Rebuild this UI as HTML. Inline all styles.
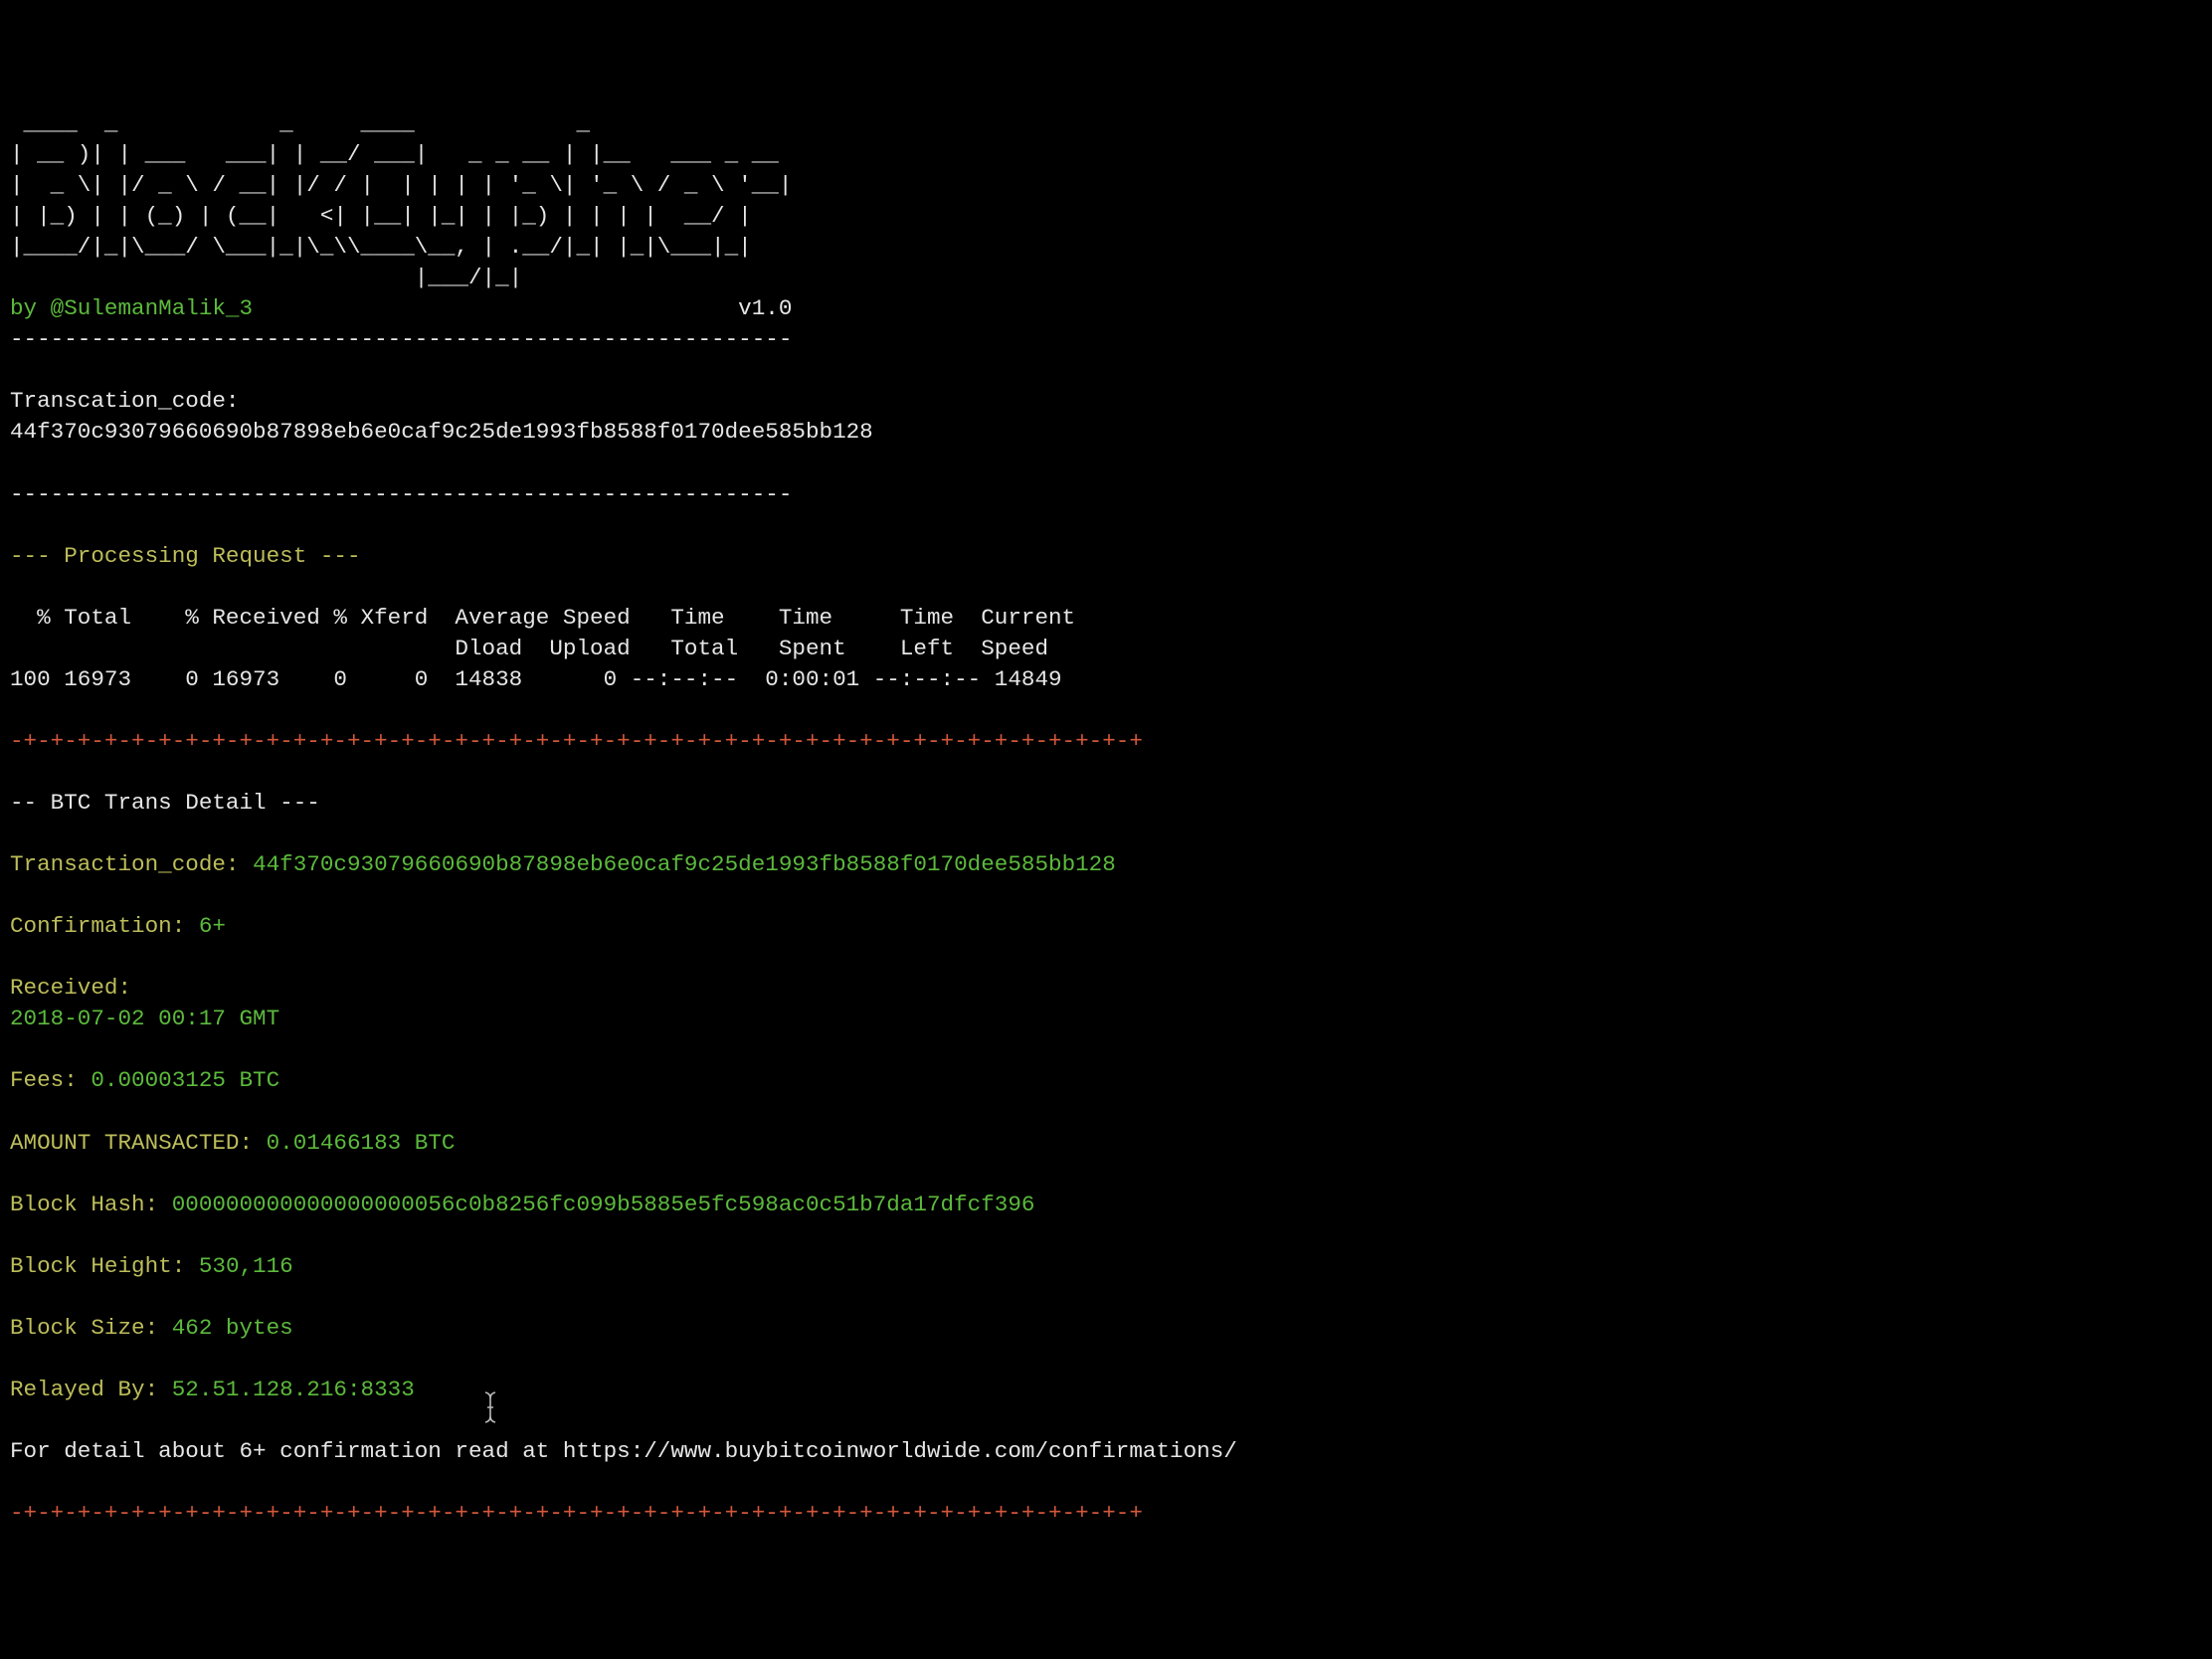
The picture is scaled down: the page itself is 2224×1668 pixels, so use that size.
<!DOCTYPE html>
<html><head><meta charset="utf-8"><style>
html,body{margin:0;padding:0;background:#000;}
body{width:2224px;height:1668px;overflow:hidden;position:relative;}
pre{margin:0;position:absolute;left:10px;top:109px;font-family:"Liberation Mono",monospace;font-size:22.6px;line-height:31.05px;color:#e6e6e6;white-space:pre;}
.g{color:#5cba3c}.y{color:#bdbd5a}.r{color:#d4573c}.w{color:#e6e6e6}
</style></head><body>
<pre> ____  _            _     ____            _
| __ )| | ___   ___| | __/ ___|   _ _ __ | |__   ___ _ __
|  _ \| |/ _ \ / __| |/ / |  | | | | '_ \| '_ \ / _ \ '__|
| |_) | | (_) | (__|   &lt;| |__| |_| | |_) | | | |  __/ |
|____/|_|\___/ \___|_|\_\\____\__, | .__/|_| |_|\___|_|
                              |___/|_|
<span class="g">by @SulemanMalik_3</span>                                    v1.0
----------------------------------------------------------

Transcation_code:
44f370c93079660690b87898eb6e0caf9c25de1993fb8588f0170dee585bb128

----------------------------------------------------------

<span class="y">--- Processing Request ---</span>

  % Total    % Received % Xferd  Average Speed   Time    Time     Time  Current
                                 Dload  Upload   Total   Spent    Left  Speed
100 16973    0 16973    0     0  14838      0 --:--:--  0:00:01 --:--:-- 14849

<span class="r">-+-+-+-+-+-+-+-+-+-+-+-+-+-+-+-+-+-+-+-+-+-+-+-+-+-+-+-+-+-+-+-+-+-+-+-+-+-+-+-+-+-+</span>

-- BTC Trans Detail ---

<span class="y">Transaction_code: </span><span class="g">44f370c93079660690b87898eb6e0caf9c25de1993fb8588f0170dee585bb128</span>

<span class="y">Confirmation: </span><span class="g">6+</span>

<span class="y">Received:</span>
<span class="g">2018-07-02 00:17 GMT</span>

<span class="y">Fees: </span><span class="g">0.00003125 BTC</span>

<span class="y">AMOUNT TRANSACTED: </span><span class="g">0.01466183 BTC</span>

<span class="y">Block Hash: </span><span class="g">000000000000000000056c0b8256fc099b5885e5fc598ac0c51b7da17dfcf396</span>

<span class="y">Block Height: </span><span class="g">530,116</span>

<span class="y">Block Size: </span><span class="g">462 bytes</span>

<span class="y">Relayed By: </span><span class="g">52.51.128.216:8333</span>

For detail about 6+ confirmation read at https://www.buybitcoinworldwide.com/confirmations/

<span class="r">-+-+-+-+-+-+-+-+-+-+-+-+-+-+-+-+-+-+-+-+-+-+-+-+-+-+-+-+-+-+-+-+-+-+-+-+-+-+-+-+-+-+</span>
</pre>
<svg style="position:absolute;left:486px;top:1398px" width="14" height="34" viewBox="0 0 14 34"><path d="M2 2 Q7 3 7 8 V26 Q7 31 2 32 M12 2 Q7 3 7 8 M7 26 Q7 31 12 32 M4 17 H10" stroke="#bbb" stroke-width="1.6" fill="none"/></svg>
</body></html>
